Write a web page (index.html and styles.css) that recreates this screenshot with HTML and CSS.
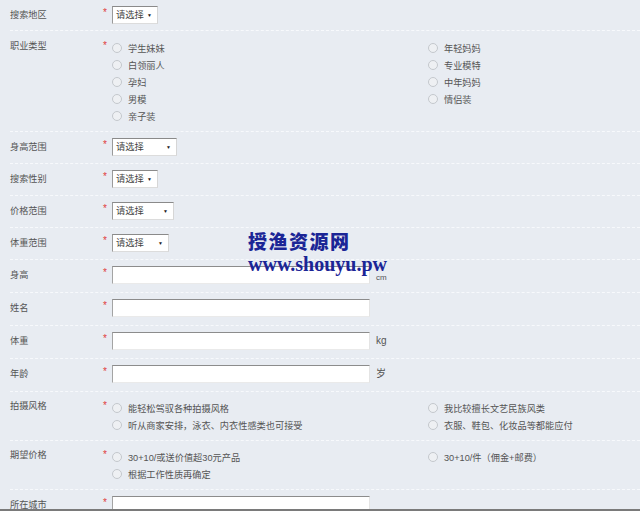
FILE: index.html
```html
<!DOCTYPE html>
<html lang="zh-CN">
<head>
    <meta charset="UTF-8">
    <meta name="viewport" content="width=device-width, initial-scale=1.0">
    <title>模特报名</title>
    <link rel="stylesheet" href="styles.css">
</head>
<body>

<div class="form-list">
    <div class="form-row">
        <div class="row-label">搜索地区</div>
        <div class="row-star">*</div>
        <div class="select-box w46">请选择<span class="arrow">▼</span></div>
    </div>

    <div class="form-row options-row">
        <div class="row-label">职业类型</div>
        <div class="row-star">*</div>
        <div class="option-cols">
            <div class="option-col">
                <div class="option"><span class="radio"></span>学生妹妹</div>
                <div class="option"><span class="radio"></span>白领丽人</div>
                <div class="option"><span class="radio"></span>孕妇</div>
                <div class="option"><span class="radio"></span>男模</div>
                <div class="option"><span class="radio"></span>亲子装</div>
            </div>
            <div class="option-col">
                <div class="option"><span class="radio"></span>年轻妈妈</div>
                <div class="option"><span class="radio"></span>专业模特</div>
                <div class="option"><span class="radio"></span>中年妈妈</div>
                <div class="option"><span class="radio"></span>情侣装</div>
            </div>
        </div>
    </div>

    <div class="form-row">
        <div class="row-label">身高范围</div>
        <div class="row-star">*</div>
        <div class="select-box w65">请选择<span class="arrow">▼</span></div>
    </div>

    <div class="form-row">
        <div class="row-label">搜索性别</div>
        <div class="row-star">*</div>
        <div class="select-box w46">请选择<span class="arrow">▼</span></div>
    </div>

    <div class="form-row">
        <div class="row-label">价格范围</div>
        <div class="row-star">*</div>
        <div class="select-box w62">请选择<span class="arrow">▼</span></div>
    </div>

    <div class="form-row">
        <div class="row-label">体重范围</div>
        <div class="row-star">*</div>
        <div class="select-box w57">请选择<span class="arrow">▼</span></div>
    </div>

    <div class="form-row input-row">
        <div class="row-label">身高</div>
        <div class="row-star">*</div>
        <div class="text-input"></div>
        <div class="unit unit-small">cm</div>
    </div>

    <div class="form-row input-row">
        <div class="row-label">姓名</div>
        <div class="row-star">*</div>
        <div class="text-input"></div>
    </div>

    <div class="form-row input-row">
        <div class="row-label">体重</div>
        <div class="row-star">*</div>
        <div class="text-input"></div>
        <div class="unit">kg</div>
    </div>

    <div class="form-row input-row">
        <div class="row-label">年龄</div>
        <div class="row-star">*</div>
        <div class="text-input"></div>
        <div class="unit">岁</div>
    </div>

    <div class="form-row options-row short">
        <div class="row-label">拍摄风格</div>
        <div class="row-star">*</div>
        <div class="option-cols">
            <div class="option-col">
                <div class="option"><span class="radio"></span>能轻松驾驭各种拍摄风格</div>
                <div class="option"><span class="radio"></span>听从商家安排，泳衣、内衣性感类也可接受</div>
            </div>
            <div class="option-col">
                <div class="option"><span class="radio"></span>我比较擅长文艺民族风类</div>
                <div class="option"><span class="radio"></span>衣服、鞋包、化妆品等都能应付</div>
            </div>
        </div>
    </div>

    <div class="form-row options-row short">
        <div class="row-label">期望价格</div>
        <div class="row-star">*</div>
        <div class="option-cols">
            <div class="option-col">
                <div class="option"><span class="radio"></span>30+10/或送价值超30元产品</div>
                <div class="option"><span class="radio"></span>根据工作性质再确定</div>
            </div>
            <div class="option-col">
                <div class="option"><span class="radio"></span>30+10/件（佣金+邮费）</div>
            </div>
        </div>
    </div>

    <div class="form-row input-row">
        <div class="row-label">所在城市</div>
        <div class="row-star">*</div>
        <div class="text-input"></div>
    </div>
</div>

<!-- site watermark over the form -->
<div class="watermark">
    <div class="wm-name">授渔资源网</div>
    <div class="wm-url">www.shouyu.pw</div>
</div>

<div class="bottom-line"></div>

</body>
</html>
```

FILE: styles.css
```css
body {
    margin: 0;
    background-color: #e8ecf2;
    font-family: "Liberation Sans", "Noto Sans CJK SC", sans-serif;
    font-size: 9.2px;
    color: #555;
    overflow: hidden;
}
.form-list {
    padding-left: 10px;
}
.form-row {
    display: flex;
    align-items: flex-start;
    padding: 6px 0 7px;
    border-bottom: 1px dashed #f7f9fc;
}
.form-row:first-child {
    padding-bottom: 6px;
}
.row-label {
    flex-shrink: 0;
    width: 91px;
    line-height: 18px;
    white-space: nowrap;
}
.row-star {
    flex-shrink: 0;
    width: 11px;
    color: #e03b3b;
    font-size: 10px;
    line-height: 14px;
    padding-left: 2px;
    box-sizing: border-box;
}
.select-box {
    position: relative;
    flex-shrink: 0;
    height: 18px;
    box-sizing: border-box;
    line-height: 16px;
    padding-left: 3px;
    background: #fff;
    border: 1px solid;
    border-color: #8a8a8a #d6d6d6 #dcdcdc #9a9a9a;
    color: #444;
    font-size: 9.3px;
    white-space: nowrap;
}
.arrow {
    position: absolute;
    right: 5px;
    top: 0;
    font-size: 5px;
    color: #222;
}
.w46 { width: 46px; }
.w57 { width: 57px; }
.w62 { width: 62px; }
.w65 { width: 65px; }

.form-row.options-row {
    padding-top: 8px;
    padding-bottom: 7px;
}
.options-row .row-label,
.options-row .row-star {
    line-height: 14px;
}
.form-row.options-row.short {
    padding-top: 7px;
}
.option-cols {
    display: flex;
}
.option-col {
    width: 316px;
    flex-shrink: 0;
}
.option-col + .option-col {
    width: auto;
}
.option {
    display: flex;
    align-items: center;
    height: 17px;
    white-space: nowrap;
}
.radio {
    flex-shrink: 0;
    width: 8px;
    height: 8px;
    border-radius: 50%;
    border: 1px solid #c4c8cd;
    background: #eef0f3;
    margin-right: 6px;
}

.form-row.input-row {
    padding-top: 6px;
    padding-bottom: 8px;
}
.text-input {
    flex-shrink: 0;
    width: 258px;
    height: 18px;
    box-sizing: border-box;
    background: #fff;
    border: 1px solid;
    border-color: #8c8c8c #e4e4e4 #eaeaea #a4a4a4;
}
.unit {
    margin-left: 6px;
    line-height: 18px;
    font-size: 10px;
    color: #555;
}
.unit-small {
    font-size: 8px;
    line-height: 8px;
    padding-top: 8px;
}

.watermark {
    position: absolute;
    left: 248px;
    top: 229px;
    color: #1b2596;
}
.wm-name {
    font-family: "Noto Sans CJK SC", sans-serif;
    font-weight: 900;
    font-size: 19px;
    letter-spacing: 1.5px;
    line-height: 24px;
}
.wm-url {
    font-family: "Liberation Serif", serif;
    font-weight: bold;
    font-size: 20px;
    line-height: 22px;
}
.bottom-line {
    position: fixed;
    left: 0;
    right: 0;
    bottom: 0;
    height: 2px;
    background: #7a7a7a;
}
```
